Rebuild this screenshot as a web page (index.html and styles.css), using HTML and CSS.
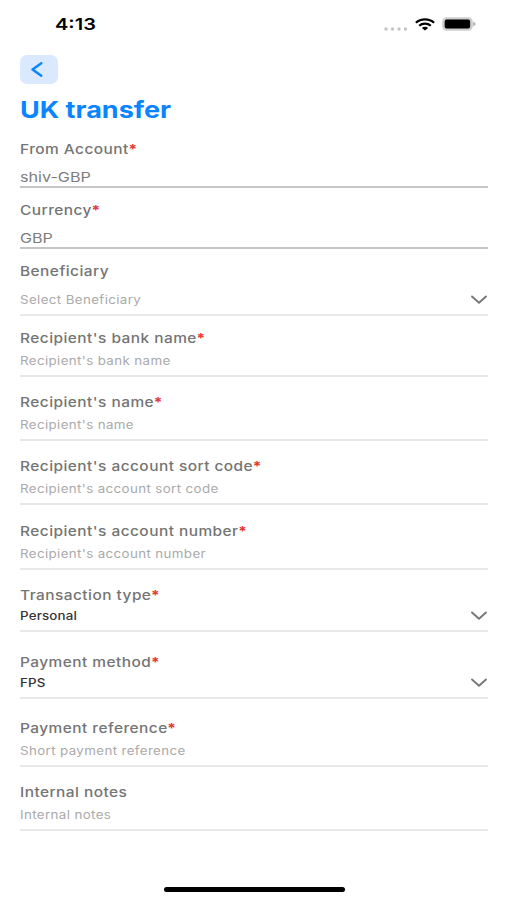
FILE: index.html
```html
<!DOCTYPE html>
<html lang="en">
<head>
<meta charset="utf-8">
<title>UK transfer</title>
<link rel="stylesheet" href="styles.css">
</head>
<body>
<div class="screen">
  <header class="status">
    <span class="time wide">4:13</span>
    <div class="indicators">
      <svg class="dots" width="24" height="4" viewBox="0 0 24 4" fill="#c4c4c4"><circle cx="2" cy="2" r="1.7"/><circle cx="8.5" cy="2" r="1.7"/><circle cx="15" cy="2" r="1.7"/><circle cx="21.5" cy="2" r="1.7"/></svg>
      <svg class="wifi" width="20" height="13" viewBox="0 0 20 13" fill="none" stroke="#000" stroke-width="2.2"><path d="M.9 4.8C5.8 .2 14.2 .2 19.1 4.8M4.2 7.7C7.4 4.8 12.6 4.8 15.8 7.7"/><path d="M6.9 9.9Q10 7.6 13.1 9.9L10 12.6Z" fill="#000" stroke="none"/></svg>
      <svg class="battery" width="34" height="14" viewBox="0 0 34 14"><rect x=".9" y=".9" width="29.2" height="12.2" rx="3.8" fill="#c9c9c9" stroke="#cfcfcf" stroke-width="1.4"/><rect x="2.7" y="2.6" width="25.4" height="8.8" rx="2"/><path d="M31.3 4.8Q33.6 5.5 33.6 7T31.3 9.2Z" fill="#aaa"/></svg>
    </div>
  </header>
  <button class="back" aria-label="Back"><svg width="12" height="15" viewBox="0 0 12 15" fill="none" stroke="#0a84ff" stroke-width="2.4" stroke-linecap="round" stroke-linejoin="round"><path d="M10.3 1.2L1.5 7.5L10.3 13.8"/></svg></button>
  <h1 class="title"><span class="wide">UK transfer</span></h1>
  <main>
    <section class="field locked"><div class="label"><span class="wide">From Account<b>*</b></span></div><div class="control"><span class="wide">shiv-GBP</span></div></section>
    <section class="field locked"><div class="label"><span class="wide">Currency<b>*</b></span></div><div class="control"><span class="wide">GBP</span></div></section>
    <section class="field picker"><div class="label"><span class="wide">Beneficiary</span></div><div class="control"><span class="wide">Select Beneficiary</span><svg class="chevron" viewBox="0 0 18 10"><path d="M2 1.5L9 7.8L16 1.5"/></svg></div></section>
    <section class="field"><div class="label"><span class="wide">Recipient's bank name<b>*</b></span></div><div class="control"><span class="wide">Recipient's bank name</span></div></section>
    <section class="field"><div class="label"><span class="wide">Recipient's name<b>*</b></span></div><div class="control"><span class="wide">Recipient's name</span></div></section>
    <section class="field roomy"><div class="label"><span class="wide">Recipient's account sort code<b>*</b></span></div><div class="control"><span class="wide">Recipient's account sort code</span></div></section>
    <section class="field"><div class="label"><span class="wide">Recipient's account number<b>*</b></span></div><div class="control"><span class="wide">Recipient's account number</span></div></section>
    <section class="field chosen"><div class="label"><span class="wide">Transaction type<b>*</b></span></div><div class="control"><span class="wide">Personal</span><svg class="chevron" viewBox="0 0 18 10"><path d="M2 1.5L9 7.8L16 1.5"/></svg></div></section>
    <section class="field chosen"><div class="label"><span class="wide">Payment method<b>*</b></span></div><div class="control"><span class="wide">FPS</span><svg class="chevron" viewBox="0 0 18 10"><path d="M2 1.5L9 7.8L16 1.5"/></svg></div></section>
    <section class="field"><div class="label"><span class="wide">Payment reference<b>*</b></span></div><div class="control"><span class="wide">Short payment reference</span></div></section>
    <section class="field"><div class="label"><span class="wide">Internal notes</span></div><div class="control"><span class="wide">Internal notes</span></div></section>
  </main>
  <div class="home"></div>
</div>
</body>
</html>
```
FILE: styles.css
```css
* { box-sizing: border-box; }
body { margin: 0; background: #fff; font-family: Inter, "Liberation Sans", sans-serif; }
.screen { width: 507px; height: 900px; padding: 0 19px 0 20px; display: flex; flex-direction: column; overflow: hidden; }
.wide { display: inline-block; white-space: nowrap; transform: scaleX(1.16); transform-origin: left center; }
.status { height: 54.5px; flex: none; display: flex; justify-content: space-between; padding: 14px 12px 0 35px; }
.time { height: 20px; font-size: 16.4px; line-height: 21px; font-weight: 600; transform: scaleX(1.22); }
.indicators { display: flex; align-items: flex-start; }
.dots { margin: 13px 7px 0 0; }
.wifi { margin: 4px 7px 0 0; }
.battery { margin-top: 3px; }
.back { width: 37.5px; height: 29.5px; flex: none; padding: 0 4px 0 0; border: 0; border-radius: 7px; background: #dbe9fe; display: flex; align-items: center; justify-content: center; }
.title { height: 30px; margin: 11px 0 15.4px; color: #0a84ff; font-size: 23px; line-height: 31px; font-weight: 700; flex: none; }
.title .wide { transform: scaleX(1.175); }
.field { height: 64px; }
.label { height: 18px; font-size: 13.3px; line-height: 18px; font-weight: 500; letter-spacing: .4px; color: #757575; }
.label b { color: #e53935; font-weight: 700; margin-left: -.3px; }
.control { margin-top: 5px; height: 25px; border-bottom: 2px solid #e8e8e8; display: flex; justify-content: space-between; align-items: flex-start; font-size: 11.5px; line-height: 18px; letter-spacing: .32px; color: #aaa; }
.locked { height: 61px; }
.locked .control { margin-top: 10px; height: 20px; border-color: #c5c5c5; font-size: 13.3px; color: #7d7d7d; letter-spacing: 0; }
.locked .control .wide { transform: scaleX(1.215); }
.picker { height: 67px; }
.picker .control { margin-top: 11px; }
.roomy { height: 65px; }
.chosen { height: 66.5px; }
.chosen .control { margin-top: 3px; color: #333; font-weight: 500; letter-spacing: .15px; }
.chevron { width: 18px; height: 10px; margin-top: 4px; fill: none; stroke: #777; stroke-width: 1.9; stroke-linecap: round; stroke-linejoin: round; }
.home { width: 181px; height: 5px; margin: auto auto 8px 143.5px; border-radius: 3px; background: #000; flex: none; }
```
